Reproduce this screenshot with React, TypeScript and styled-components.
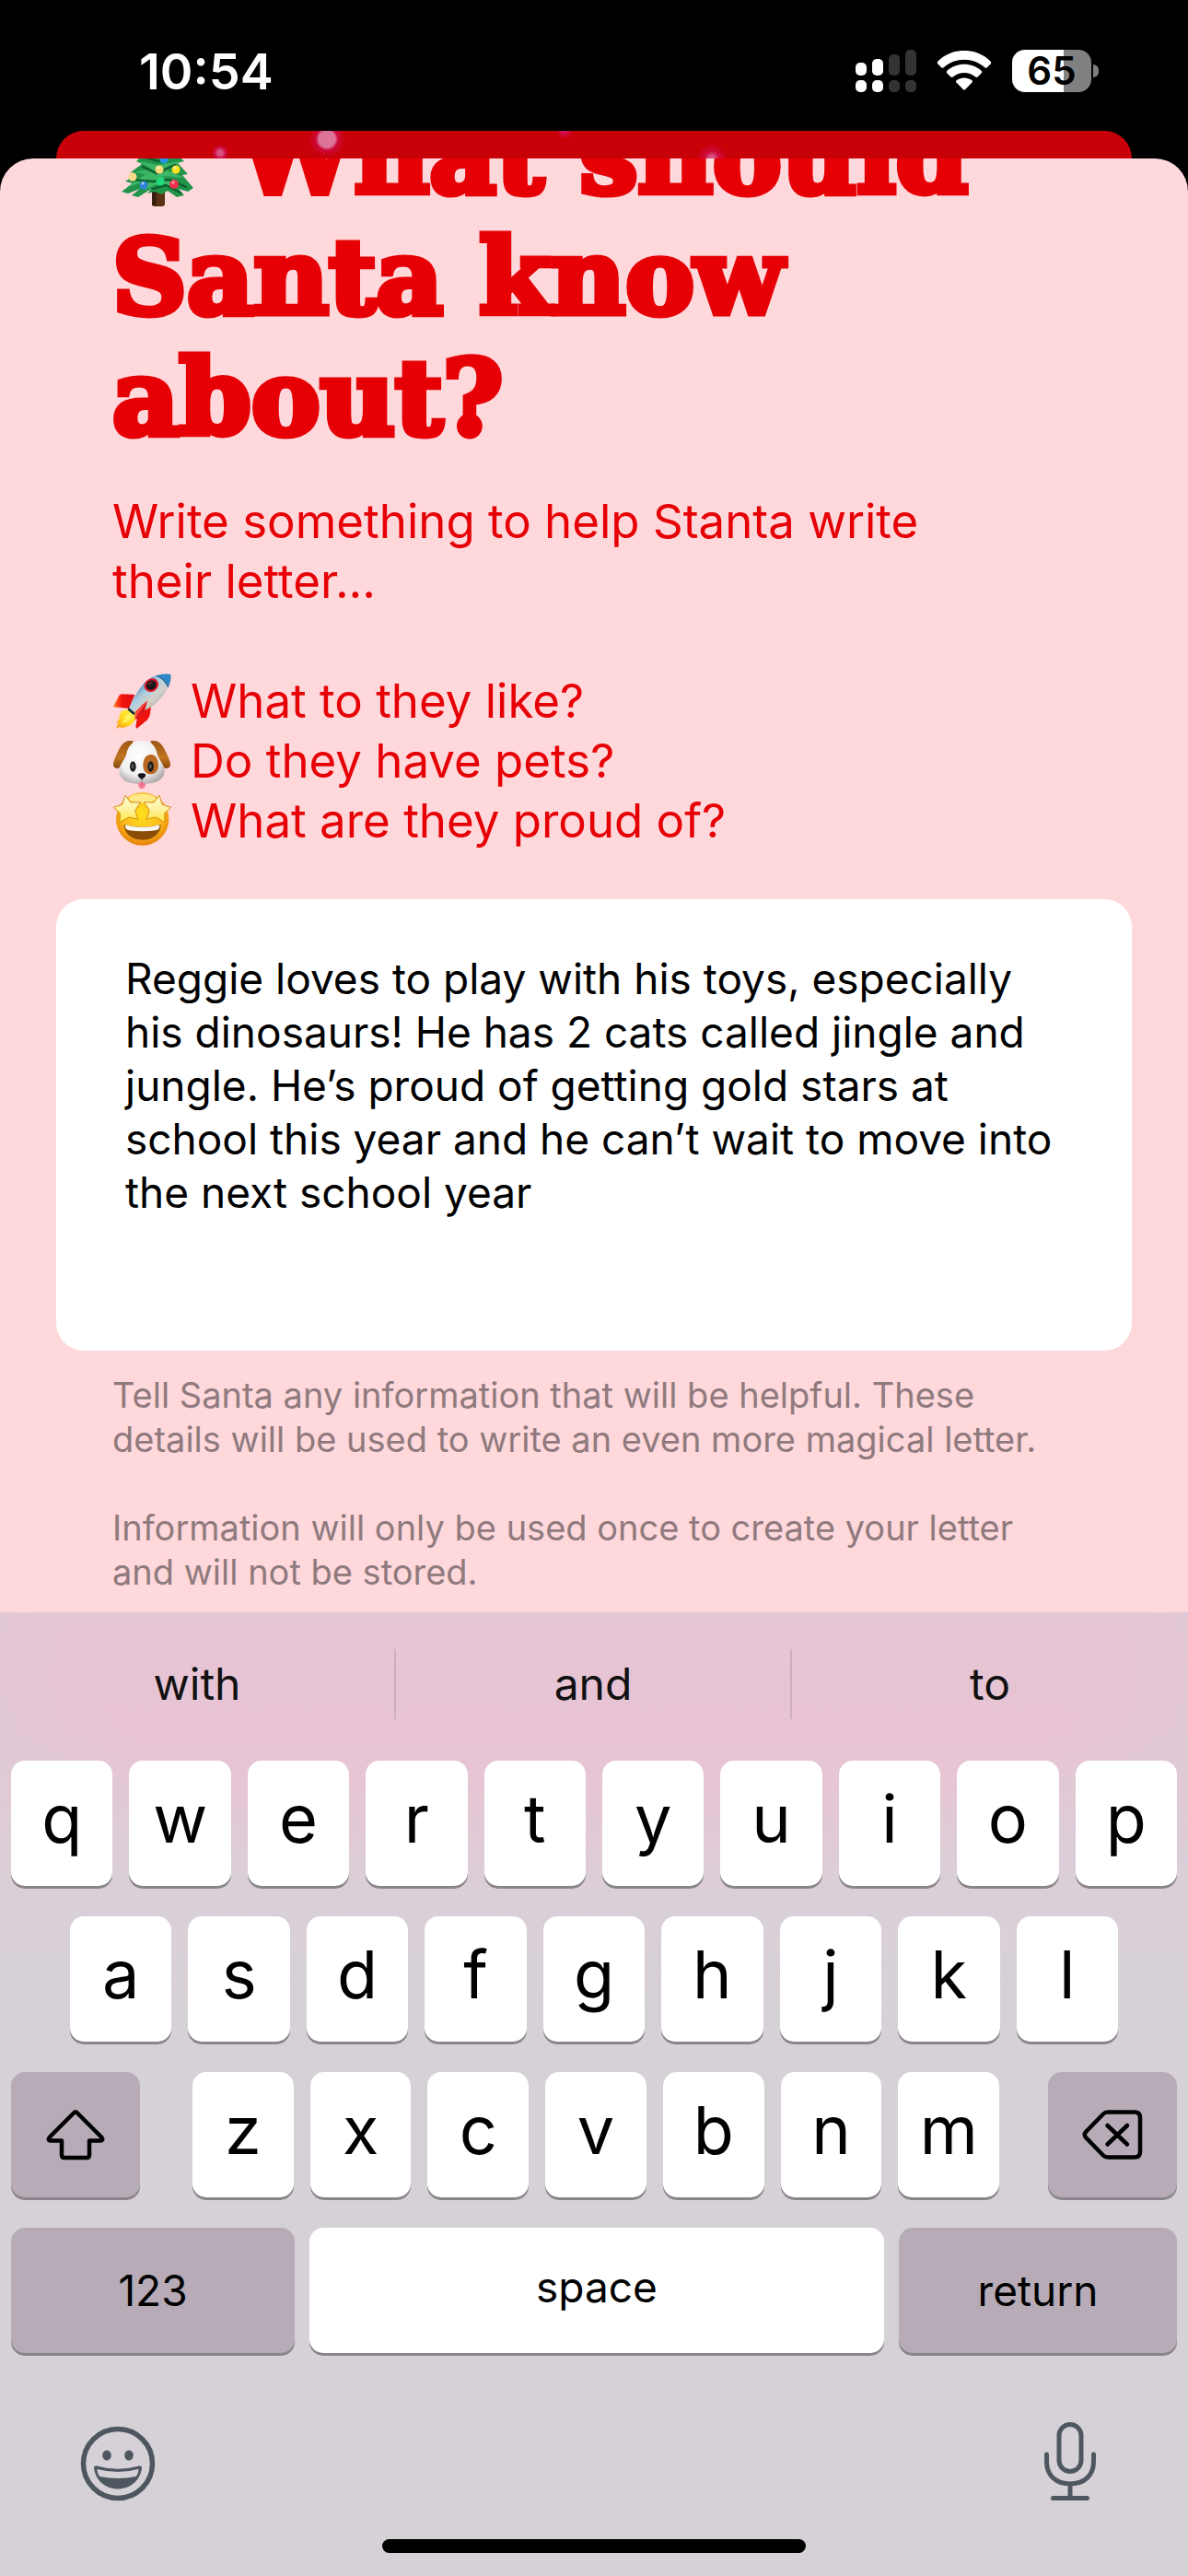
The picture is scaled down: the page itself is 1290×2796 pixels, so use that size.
import React, { useState } from 'react';
import styled, { createGlobalStyle, css } from 'styled-components';

const sans = '"Inter", "Liberation Sans", sans-serif';
const red = '#e60005';
const ink = '#4e575f';

const GlobalStyle = createGlobalStyle`
  *, *::before, *::after { box-sizing: border-box; }
  html, body { margin: 0; padding: 0; background: #000; }
  body { font-family: ${sans}; }
  h1, p, ul { margin: 0; padding: 0; }
  button, textarea { font: inherit; border: 0; margin: 0; }
`;

const Screen = styled.div`
  min-height: 100vh;
  display: flex;
  flex-direction: column;
  background: #000;
`;

const StatusBar = styled.header`
  height: 142px;
  padding: 12px 97px 0 151px;
  display: flex;
  align-items: center;
  justify-content: space-between;
  color: #fff;
`;

const Time = styled.time`
  font-size: 54px;
  font-weight: 600;
`;

const StatusIcons = styled.div`
  display: flex;
  align-items: center;
  gap: 22px;
`;

const BatteryWrap = styled.div`
  display: flex;
  align-items: center;
  gap: 2px;
`;

const Battery = styled.div<{ $level: number }>`
  width: 86px;
  height: 46px;
  border-radius: 14px;
  display: flex;
  align-items: center;
  justify-content: center;
  background: linear-gradient(to right, #fff ${(p) => p.$level}%, #808080 ${(p) => p.$level}%);
  color: #000;
  font-size: 42px;
  font-weight: 600;
  line-height: 46px;
`;

const BatteryNub = styled.div`
  width: 6px;
  height: 14px;
  border-radius: 0 6px 6px 0;
  background: #808080;
`;

const BackSheet = styled.div`
  height: 30px;
  margin: 0 61px;
  border-radius: 30px 30px 0 0;
  background:
    radial-gradient(circle at 294px 9px, #dd7499 0 9px, #d0105c99 12px, transparent 20px),
    radial-gradient(circle at 178px 24px, #d95080 0 3px, #d0105c99 6px, transparent 10px),
    radial-gradient(circle at 552px 0, #d0105c 0 1px, transparent 9px),
    radial-gradient(circle at 712px 30px, #d95080 0 3px, #d0105c99 8px, transparent 16px),
    #c80008;
`;

const Sheet = styled.main`
  border-radius: 36px 36px 0 0;
  overflow: hidden;
  background: #ffd8db;
`;

/* The form is scrolled up, so its first line sits partly under the sheet's top edge. */
const Scrolled = styled.div`
  margin-top: -68px;
  padding: 0 61px 20px;
  display: flex;
  flex-direction: column;
`;

const Intro = styled.section`
  padding: 0 61px;
  color: ${red};
`;

const Heading = styled.h1`
  margin-bottom: 36px;
  font-family: "DejaVu Serif", "Liberation Serif", serif;
  font-size: 112px;
  font-weight: 700;
  line-height: 131px;
  -webkit-text-stroke: 7px ${red};
`;

const Tree = styled.svg`
  width: 98px;
  height: 112px;
  vertical-align: -16px;
  -webkit-text-stroke: 0;
`;

const Lead = styled.p`
  max-width: 900px;
  margin-bottom: 65px;
  font-size: 51px;
  line-height: 65px;
`;

const Prompts = styled.ul`
  list-style: none;
  font-size: 51px;
  line-height: 65px;
`;

const Prompt = styled.li`
  display: flex;
  align-items: center;
  gap: 21px;
`;

const Emoji = styled.svg`
  width: 64px;
  height: 65px;
`;

const Notes = styled.textarea`
  display: block;
  width: 100%;
  height: 490px;
  margin: 53px 0 24px;
  padding: 57px 66px 57px 75px;
  border-radius: 30px;
  resize: none;
  outline: none;
  overflow: hidden;
  background: #fff;
  color: #000;
  font-size: 46px;
  line-height: 58px;
`;

const Footnote = styled.p`
  padding: 0 61px;
  margin-bottom: 48px;
  color: #8f7a7e;
  font-size: 38px;
  line-height: 48px;

  &:last-child { margin-bottom: 0; }
`;

const Keyboard = styled.section`
  flex: 1;
  display: flex;
  flex-direction: column;
  background:
    radial-gradient(ellipse 56% 100% at 50% 0, transparent 80%, #d6d1d866 100%) 0 0 / 100% 330px no-repeat,
    linear-gradient(#e5c6d5 0, #e8c3d4 130px, #e5c6d5 200px, #dacfd8 320px, #d6d1d7 440px);
`;

const Suggestions = styled.div`
  display: grid;
  grid-template-columns: repeat(3, 1fr);
  height: 155px;
  margin-bottom: 6px;
  align-items: center;
`;

const Suggestion = styled.button`
  height: 76px;
  padding: 0;
  background: none;
  color: #111;
  font-size: 48px;

  &:not(:last-child) { border-right: 2px solid #cfafbf; }
`;

const Rows = styled.div`
  display: flex;
  flex-direction: column;
  gap: 33px;
  padding: 0 12px;
`;

const Row = styled.div<{ $inset?: number; $gap?: number }>`
  display: flex;
  gap: ${(p) => p.$gap ?? 18}px;
  padding: 0 ${(p) => p.$inset ?? 0}px;
`;

const LetterGroup = styled.div`
  flex: 1;
  display: flex;
  gap: 18px;
  margin: 0 53px 0 57px;
`;

const keyBase = css`
  height: 136px;
  display: flex;
  align-items: center;
  justify-content: center;
  border-radius: 15px;
  box-shadow: 0 3px 0 #8a858a;
  color: #000;
`;

const LetterKey = styled.button`
  ${keyBase}
  flex: 1 1 0;
  min-width: 0;
  padding: 0 0 12px;
  background: #fff;
  font-size: 72px;
  font-weight: 400;
`;

const WordKey = styled.button<{ $width?: number }>`
  ${keyBase}
  flex: ${(p) => (p.$width ? `0 0 ${p.$width}px` : '1 1 0')};
  padding: 0;
  background: #b6abb7;
  font-size: 46px;
`;

const SpaceKey = styled(WordKey)`
  padding-bottom: 8px;
  background: #fff;
`;

const Tools = styled.div`
  display: flex;
  align-items: flex-end;
  justify-content: space-between;
  padding: 75px 99px 0 87px;
`;

const ToolButton = styled.button`
  display: flex;
  padding: 0;
  background: none;
  color: ${ink};
`;

const HomeBar = styled.div`
  width: 460px;
  height: 15px;
  margin: 41px auto 24px;
  border-radius: 8px;
  background: #000;
`;

const Signal = () => (
  <svg width="66" height="46" viewBox="0 0 66 46" role="img" aria-label="Signal">
    {[14, 10, 5, 0].map((top, i) => (
      <g key={top} fill={i < 2 ? '#fff' : '#333'}>
        <rect x={i * 18} y={top} width="12" height={28 - top} rx="5" />
        <rect x={i * 18} y="33" width="12" height="13" rx="5" />
      </g>
    ))}
  </svg>
);

const Wifi = () => (
  <svg width="60" height="44" viewBox="0 0 60 44" role="img" aria-label="Wi-Fi" fill="#fff">
    <path d="M1.5 14.5Q0 13 1.5 11.500C17-4 43-4 58.500 11.500Q60 13 58.500 14.500L54.800 18.200Q53.500 19.500 52 18.100C40 7 20 7 8 18.100Q6.500 19.500 5.200 18.200Z" />
    <path d="M11.300 24.500Q10 23 11.400 21.700C22 12.500 38 12.500 48.600 21.700Q50 23 48.700 24.500L44.800 28.300Q43.500 29.500 42 28.300C35 22.500 25 22.500 18 28.300Q16.500 29.500 15.200 28.300Z" />
    <path d="M21.500 34.600Q20.200 33.200 21.800 32C26.500 28.500 33.500 28.500 38.200 32Q39.800 33.200 38.500 34.600L31.200 42Q30 43 28.800 42Z" />
  </svg>
);

const TreeEmoji = () => (
  <Tree viewBox="0 0 98 112" role="img" aria-label="Christmas tree">
    <rect x="43" y="90" width="14" height="21" rx="3" fill="#5b3214" />
    <rect x="43" y="90" width="5" height="20" fill="#38200f" />
    <path d="M50 12L64 34L59 35L72 50L66 51L78 62L71 64L82 76L76 77L88 91L82 95L72 92L78 99L70 101L60 94L54 98L46 95L38 97L42 92L28 101L21 99L30 92L17 97L10 95L22 86L14 84L26 76L20 74L32 65L26 62L36 52L30 49L42 36L37 34Z" fill="#22944a" />
    <path d="M28 62L50 66L74 62L60 72L78 80L54 78L70 90L50 86L34 94L42 82L16 90L36 76L24 74L42 70Z" fill="#3db765" />
    <path d="M33 68L48 75L68 66M22 82L44 84L62 82L80 90M44 92L58 88L74 96M36 58L50 62L66 56" fill="none" stroke="#0c6331" strokeWidth="2.500" strokeLinecap="round" />
    <circle cx="56" cy="60" r="4.500" fill="#2795e8" />
    <circle cx="51" cy="71" r="4.500" fill="#ffd978" />
    <circle cx="69" cy="71" r="4.500" fill="#ffe21f" />
    <circle cx="22" cy="79" r="4.500" fill="#f7d98a" />
    <circle cx="52" cy="84" r="4.500" fill="#1ed97c" />
    <circle cx="34" cy="88" r="4.500" fill="#2b86d9" />
    <circle cx="67" cy="87" r="5" fill="#f0304d" />
    <g fill="#fff" opacity=".6">
      <circle cx="50" cy="69" r="1.500" /><circle cx="68" cy="69" r="1.500" /><circle cx="33" cy="86" r="1.500" /><circle cx="66" cy="85" r="1.500" />
    </g>
  </Tree>
);

const Rocket = () => (
  <Emoji viewBox="24 18 192 195" role="img" aria-label="Rocket">
    <defs>
      <linearGradient id="hull" x1="0" y1="0" x2="1" y2="1">
        <stop offset="0.2" stopColor="#2f79b0" /><stop offset="0.42" stopColor="#a9cfe2" />
        <stop offset="0.6" stopColor="#d4d2cc" /><stop offset="1" stopColor="#6f7d84" />
      </linearGradient>
      <linearGradient id="fin" x1="0" y1="0" x2="1" y2="0">
        <stop offset="0" stopColor="#ff7a1c" /><stop offset="0.4" stopColor="#f5150e" /><stop offset="1" stopColor="#d80b14" />
      </linearGradient>
      <linearGradient id="flame" x1="1" y1="0" x2="0" y2="1">
        <stop offset="0" stopColor="#fff04a" /><stop offset="0.6" stopColor="#ffd91c" /><stop offset="1" stopColor="#ff8a12" />
      </linearGradient>
    </defs>
    <path d="M97 96L53 94Q47 96 43 104L27 136L78 141Z" fill="url(#fin)" />
    <path d="M150 135L147 158Q145 170 138 178L104 206L100 200L108 152Z" fill="#f0140f" />
    <path d="M80 144L54 149L44 170L50 168L36 190L44 186L36 207L52 199L50 206L84 196L104 172L108 154Z" fill="url(#flame)" />
    <path d="M84 152L62 168L66 174L52 190L76 182L94 164Z" fill="#fff25c" />
    <path d="M76 137L99 155L94 163L74 146Z" fill="#16303f" />
    <path d="M214 30C190 22 148 34 124 62C102 88 88 118 80 138L100 156C126 152 156 136 178 112C204 84 216 54 214 30Z" fill="url(#hull)" />
    <path d="M214 30C202 26 184 29 168 34C182 40 198 56 206 72C214 56 216 42 214 30Z" fill="#2f86c4" />
    <path d="M168 34C184 40 199 57 206 72" fill="none" stroke="#174d76" strokeWidth="3" />
    <path d="M108 92C122 98 142 112 153 130" fill="none" stroke="#d9bf8c" strokeWidth="3" />
    <ellipse cx="151" cy="65" rx="24" ry="21" transform="rotate(-35 151 65)" fill="#e01523" />
    <ellipse cx="151" cy="65" rx="17" ry="15" transform="rotate(-35 151 65)" fill="#15161b" />
    <path d="M141 60Q148 50 160 56Q150 58 141 68Z" fill="#5b2b2f" />
    <path d="M138 116L118 132L98 178L108 172L130 146Z" fill="#d3141c" />
    <path d="M138 116L100 150L96 176L124 138Z" fill="#ff4034" />
  </Emoji>
);

const Dog = () => (
  <Emoji viewBox="24 213 192 195" role="img" aria-label="Dog">
    <defs>
      <radialGradient id="fur" cx="0.45" cy="0.35" r="0.7">
        <stop offset="0" stopColor="#fff" /><stop offset="0.65" stopColor="#f0eff0" /><stop offset="1" stopColor="#aaa5a5" />
      </radialGradient>
      <linearGradient id="ear" x1="0" y1="0" x2="0" y2="1">
        <stop offset="0" stopColor="#9b5614" /><stop offset="0.6" stopColor="#c17420" /><stop offset="1" stopColor="#86480f" />
      </linearGradient>
    </defs>
    <path d="M92 247C62 240 50 264 40 286C32 304 20 326 32 334C46 342 60 326 70 300Z" fill="url(#ear)" />
    <path d="M148 247C178 240 190 264 200 286C208 304 220 326 208 334C194 342 180 326 170 300Z" fill="url(#ear)" />
    <path d="M107 376Q106 402 120 403Q134 402 133 376Z" fill="#f87c98" />
    <path d="M120 380V392" stroke="#d94f70" strokeWidth="3" />
    <path d="M120 246C90 246 76 262 70 288C66 308 46 322 46 346C46 372 76 386 103 386Q114 386 120 378Q126 386 137 386C164 386 194 372 194 346C194 322 174 308 170 288C164 262 150 246 120 246Z" fill="url(#fur)" />
    <path d="M150 291C132 291 124 308 124 326C124 344 134 355 148 355C164 355 174 342 174 326C174 308 166 291 150 291Z" fill="#b96a20" />
    <ellipse cx="91" cy="330" rx="10" ry="17" fill="#1c1c1e" />
    <ellipse cx="149" cy="330" rx="10" ry="17" fill="#1c1c1e" />
    <ellipse cx="90" cy="329" rx="4" ry="8" fill="#59595c" />
    <ellipse cx="148" cy="329" rx="4" ry="8" fill="#59595c" />
    <path d="M120 352C108 352 104 357 110 364Q116 371 120 371Q124 371 130 364C136 357 132 352 120 352Z" fill="#151517" />
    <path d="M120 368V376" stroke="#3b3b3d" strokeWidth="3" />
  </Emoji>
);

const StarEyes = () => (
  <Emoji viewBox="24 408 192 195" role="img" aria-label="Star-struck face">
    <defs>
      <radialGradient id="face" cx="0.5" cy="0.4" r="0.62">
        <stop offset="0" stopColor="#ffe01e" /><stop offset="0.6" stopColor="#fcbc1c" /><stop offset="1" stopColor="#e57d06" />
      </radialGradient>
      <linearGradient id="star" x1="0" y1="0" x2="0" y2="1">
        <stop offset="0" stopColor="#fffbd0" /><stop offset="0.5" stopColor="#fdf3a4" /><stop offset="1" stopColor="#ffe53a" />
      </linearGradient>
    </defs>
    <circle cx="122" cy="501" r="86" fill="url(#face)" />
    <ellipse cx="122" cy="434" rx="44" ry="15" fill="#fff3a8" opacity=".8" />
    <path d="M62 519Q122 535 182 519C182 548 156 569 122 569C88 569 62 548 62 519Z" fill="#8b4c06" />
    <path d="M66 520Q122 535 178 520Q179 536 166 538Q122 544 78 538Q65 536 66 520Z" fill="#f7f6f2" />
    <g fill="url(#star)" stroke="#d98b0a" strokeWidth="3" strokeLinejoin="round">
      <path d="M66 424L84 447L116 446L98 474L108 502L78 495L48 512L49 482L28 463L56 454Z" />
      <path d="M177 424L159 447L127 446L145 474L135 502L165 495L195 512L194 482L215 463L187 454Z" />
    </g>
  </Emoji>
);

const ShiftIcon = () => (
  <svg width="64" height="56" viewBox="0 0 64 56" fill="none" stroke="#000" strokeWidth="4.500" strokeLinejoin="round" aria-hidden="true">
    <path d="M30 4.500Q32 2.500 34 4.500L60.500 31Q62.500 34.500 59 34.500H47V50Q47 53 44 53H20Q17 53 17 50V34.500H5Q1.500 34.500 3.500 31Z" />
  </svg>
);

const DeleteIcon = () => (
  <svg width="66" height="54" viewBox="0 0 66 54" fill="none" stroke="#000" strokeWidth="4.500" strokeLinecap="round" strokeLinejoin="round" aria-hidden="true">
    <path d="M28 2.500H57Q63 2.500 63 8.500V45.500Q63 51.500 57 51.500H28Q25 51.500 23 49.500L4 30Q1.500 27 4 24L23 4.500Q25 2.500 28 2.500Z" />
    <path d="M27.500 17L49 37.500M49 17L27.500 37.500" />
  </svg>
);

const SmileIcon = () => (
  <svg width="82" height="82" viewBox="0 0 82 82" aria-hidden="true">
    <circle cx="41" cy="41" r="37.500" fill="none" stroke="currentColor" strokeWidth="5.500" />
    <ellipse cx="29" cy="32" rx="4.800" ry="5.500" fill="currentColor" />
    <ellipse cx="53" cy="32" rx="4.800" ry="5.500" fill="currentColor" />
    <path d="M18 43.500Q41 50 64 43.500Q67.500 43 67 46C65 60 54 68.500 41 68.500C28 68.500 17 60 15 46Q14.500 43 18 43.500Z" fill="currentColor" />
    <path d="M18.500 47Q41 53 63.500 47Q63 53 60.500 55Q41 59 21.500 55Q19 53 18.500 47Z" fill="#d6d1d7" />
  </svg>
);

const MicIcon = () => (
  <svg width="58" height="86" viewBox="0 0 58 86" fill="none" stroke="currentColor" strokeWidth="5" strokeLinecap="round" aria-hidden="true">
    <rect x="17" y="2.500" width="24" height="51" rx="12" />
    <path d="M3.500 35V43C3.500 58 14 67 29 67C44 67 54.500 58 54.500 43V35M29 67V82M10.500 82.500H47.500" />
  </svg>
);

const topRow = 'qwertyuiop'.split('');
const homeRow = 'asdfghjkl'.split('');
const bottomRow = 'zxcvbnm'.split('');

const prompts = [
  { icon: <Rocket />, text: 'What to they like?' },
  { icon: <Dog />, text: 'Do they have pets?' },
  { icon: <StarEyes />, text: 'What are they proud of?' },
];

export default function App() {
  const [notes, setNotes] = useState(
    'Reggie loves to play with his toys, especially his dinosaurs! He has 2 cats called jingle and jungle. He’s proud of getting gold stars at school this year and he can’t wait to move into the next school year',
  );
  const type = (text: string) => () => setNotes((n) => n + text);

  return (
    <>
      <GlobalStyle />
      <Screen>
        <StatusBar>
          <Time>10:54</Time>
          <StatusIcons>
            <Signal />
            <Wifi />
            <BatteryWrap>
              <Battery $level={65}>65</Battery>
              <BatteryNub />
            </BatteryWrap>
          </StatusIcons>
        </StatusBar>
        <BackSheet />
        <Sheet>
          <Scrolled>
            <Intro>
              <Heading>
                <TreeEmoji /> <label htmlFor="notes">What should Santa know about?</label>
              </Heading>
              <Lead>Write something to help Stanta write their letter...</Lead>
              <Prompts>
                {prompts.map((p) => (
                  <Prompt key={p.text}>
                    {p.icon}
                    <span>{p.text}</span>
                  </Prompt>
                ))}
              </Prompts>
            </Intro>
            <Notes id="notes" spellCheck={false} value={notes} onChange={(e) => setNotes(e.target.value)} />
            <Footnote>
              Tell Santa any information that will be helpful. These details will be used to write an even more magical letter.
            </Footnote>
            <Footnote>Information will only be used once to create your letter and will not be stored.</Footnote>
          </Scrolled>
        </Sheet>
        <Keyboard aria-label="Keyboard">
          <Suggestions>
            {['with', 'and', 'to'].map((word) => (
              <Suggestion key={word} type="button" onClick={type(` ${word}`)}>{word}</Suggestion>
            ))}
          </Suggestions>
          <Rows>
            <Row>
              {topRow.map((k) => <LetterKey key={k} type="button" onClick={type(k)}>{k}</LetterKey>)}
            </Row>
            <Row $inset={64}>
              {homeRow.map((k) => <LetterKey key={k} type="button" onClick={type(k)}>{k}</LetterKey>)}
            </Row>
            <Row $gap={0}>
              <WordKey type="button" $width={140} aria-label="Shift"><ShiftIcon /></WordKey>
              <LetterGroup>
                {bottomRow.map((k) => <LetterKey key={k} type="button" onClick={type(k)}>{k}</LetterKey>)}
              </LetterGroup>
              <WordKey type="button" $width={140} aria-label="Delete" onClick={() => setNotes((n) => n.slice(0, -1))}>
                <DeleteIcon />
              </WordKey>
            </Row>
            <Row $gap={16}>
              <WordKey type="button" $width={308}>123</WordKey>
              <SpaceKey type="button" onClick={type(' ')}>space</SpaceKey>
              <WordKey type="button" $width={302} onClick={type('\n')}>return</WordKey>
            </Row>
          </Rows>
          <Tools>
            <ToolButton type="button" aria-label="Emoji"><SmileIcon /></ToolButton>
            <ToolButton type="button" aria-label="Dictate"><MicIcon /></ToolButton>
          </Tools>
          <HomeBar />
        </Keyboard>
      </Screen>
    </>
  );
}
